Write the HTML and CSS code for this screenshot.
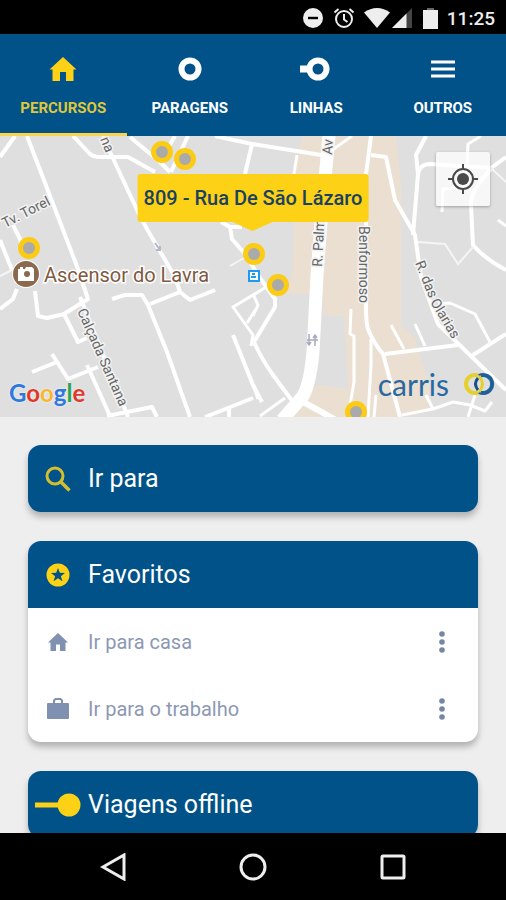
FILE: index.html
```
<!DOCTYPE html>
<html lang="pt">
<head>
  <meta charset="UTF-8" />
  <title>Carris - Percursos</title>
  <meta name="viewport" content="width=device-width, initial-scale=1.0" />
  <link rel="stylesheet" href="styles.css">
</head>
<body>
  <div class="status-bar">
    <svg width="22" height="22" viewBox="0 0 22 22"><circle cx="11" cy="11" r="10" fill="#eee"/><path d="M6 11h10" stroke="#000" stroke-width="2.4"/></svg>
    <svg width="22" height="22" viewBox="0 0 22 22" fill="none" stroke="#eee" stroke-width="2"><circle cx="11" cy="12" r="8"/><path d="M11 7v5.500l3.500 2.500M1.500 5.500l4-3.500M20.500 5.500l-4-3.500"/></svg>
    <svg class="wifi" width="26" height="20" viewBox="0 0 26 20"><path d="M0 4.500C8-1.500 18-1.500 26 4.500L13 20z" fill="#eee"/></svg>
    <svg class="signal" width="20" height="20" viewBox="0 0 20 20"><path d="M0 20L20 0v20z" fill="#444"/><path d="M0 20L14.500 5.500V20z" fill="#eee"/></svg>
    <svg class="battery" width="15" height="21" viewBox="0 0 15 21"><path d="M4 0h7v2h4v19H0V2h4z" fill="#eee"/><path d="M4 0h7v2H4z" fill="#666"/></svg>
    <span class="clock">11:25</span>
  </div>

  <nav class="tabs">
    <a href="#percursos" class="tab active">
      <svg width="28" height="28" viewBox="0 0 28 28"><path d="M14 2L.5 14.500h3V26h7.500v-9h6v9h7.500V14.500h3z" fill="currentColor"/></svg>
      <span>PERCURSOS</span>
    </a>
    <a href="#paragens" class="tab">
      <svg width="28" height="28" viewBox="0 0 28 28"><circle cx="14" cy="14" r="8.500" fill="none" stroke="currentColor" stroke-width="6"/></svg>
      <span>PARAGENS</span>
    </a>
    <a href="#linhas" class="tab">
      <svg width="32" height="28" viewBox="0 0 32 28"><circle cx="18" cy="14" r="8.500" fill="none" stroke="currentColor" stroke-width="6"/><path d="M0 14h10" stroke="currentColor" stroke-width="7"/></svg>
      <span>LINHAS</span>
    </a>
    <a href="#outros" class="tab">
      <svg width="28" height="28" viewBox="0 0 28 28"><path d="M2 7h24M2 14h24M2 21h24" stroke="currentColor" stroke-width="3"/></svg>
      <span>OUTROS</span>
    </a>
  </nav>

  <section class="map">
    <svg class="map-canvas" viewBox="0 0 506 281" preserveAspectRatio="xMidYMid slice">
      <rect width="506" height="281" fill="#dfdfdf"/>
      <!-- shopping area -->
      <path class="area" d="M303 0H396L401 50V189L415 202L423 229L430 250L428 275L405 281H290L296 256L320 249L348 253L344 180L323 179V158H286L293 135L294 60L297 19z"/>
      <g class="roads">
        <path d="M15 0L0 21M27 0L78 133L88 163L64 178L47 182L38 180L35 155"/>
        <path d="M73 0L89 17Q93 21 100 21H128L155 36M103 0L110 16L138 76L147 93L175 141L180 156L150 168M180 156L190 164L215 154"/>
        <path d="M112 163L125 159H142L148 169L167 216L190 281"/>
        <path d="M130 1L160 26L170 36M188 0L171 36M175 0L168 12M215 0L252 8L245 38M252 8L321 19"/>
        <path d="M221 86L230 91L232 103L245 118L260 142L275 163V171L254 206Q262 224 273 239L293 266M230 91H242"/>
        <path d="M13 89L20 103L24 120M0 104L12 134M17 153L13 163L0 173"/>
        <path d="M64 178L78 206L87 202M52 218L68 243L98 231M32 236L57 226M87 229L110 280M80 161L128 281"/>
        <path d="M107 280L152 271L157 281M205 281L228 272L253 262M229 272V281M233 199L253 249L262 266"/>
      </g>
      <g class="roads small">
        <path d="M268 150L233 171L253 199L251 210M247 187L256 173M253 158L258 169L253 180M253 249L258 263"/>
        <path d="M325 19L352 0M297 19L294 38M371 203V229L368 281"/>
        <path d="M481 0L468 8L466 51L443 53L442 76M498 84L506 90"/>
        <path d="M438 168L450 167L475 178L490 206M391 189L404 213M415 188L425 210"/>
        <path d="M351 173L350 198L354 200V246L348 281M376 259L374 281M285 262L260 280"/>
        <path d="M402 279L433 273L453 266L470 269L485 275L492 266M426 259L433 273M475 259L468 281"/>
      </g>
      <g class="roads">
        <path d="M371 0L366 38V171Q366 186 368 193Q373 206 383 218L400 281"/>
        <path d="M371 19L386 21L395 64L415 99L421 141L438 188L506 254M506 198L473 219M385 218L458 209"/>
        <path d="M426 0L416 19L418 38L413 99M418 38Q420 28 430 28L491 32L506 21"/>
        <path d="M491 33Q470 55 471 69L473 109Q485 123 506 134"/>
      </g>
      <path class="thin-road" d="M418 106L445 108L458 128L473 111M491 32L506 46M230 130L244 122M0 140L12 134"/>
      <path class="main-road" d="M329 0L321 86L317 140L313 216Q310 248 303 260L282 284"/>
      <path class="main-road fork" d="M296 262L336 284"/>
      <path d="M309 198v11m-2-3l2 3 2-3M315 210v-11m-2 3l2-3 2 3M307 204h11" fill="none" stroke="#a8aac0" stroke-width="1.500"/>
      <path d="M155 107l5 7m0-4v4h-4" fill="none" stroke="#b4b8cc" stroke-width="2"/>
      <g class="street-names">
        <text transform="translate(5 92) rotate(-27)">Tv. Torel</text>
        <text transform="translate(100 3) rotate(68)">na</text>
        <text transform="translate(77 175) rotate(66)">Calçada Santana</text>
        <text transform="translate(332 19) rotate(-86)">Av</text>
        <text transform="translate(322 131) rotate(-87)">R. Palma</text>
        <text transform="translate(359 90) rotate(90)">Benformoso</text>
        <text transform="translate(415 127) rotate(68)">R. das</text>
        <text transform="translate(430 166) rotate(59)">Olarias</text>
      </g>
      <g class="poi">
        <circle cx="26" cy="138" r="14" fill="#fff"/>
        <circle cx="26" cy="138" r="13" fill="#8b694f"/>
        <path d="M18 133h2v-2h3v2h2l1-2h6l2 2v12H18z" fill="#fff"/>
        <circle cx="27" cy="138" r="3" fill="#8b694f"/>
        <text x="44" y="146">Ascensor do Lavra</text>
      </g>
      <g class="station">
        <rect x="249" y="135" width="10" height="10" fill="#fff" stroke="#1d9bf0" stroke-width="2"/>
        <path d="M251 141h5M252 138h3" stroke="#1d9bf0" stroke-width="2"/>
      </g>
      <g class="stops">
        <circle cx="162" cy="16" r="8.500"/>
        <circle cx="185" cy="23" r="8.500"/>
        <circle cx="29" cy="112" r="8.500"/>
        <circle cx="254" cy="118" r="8.500"/>
        <circle cx="278" cy="149" r="8.500"/>
        <circle cx="356" cy="276" r="8.500"/>
      </g>
    </svg>
    <div class="callout">809 - Rua De São Lázaro</div>
    <button class="locate" aria-label="A minha localização">
      <svg width="30" height="30" viewBox="0 0 30 30"><circle cx="15" cy="15" r="10" fill="none" stroke="#4a4a4a" stroke-width="2"/><circle cx="15" cy="15" r="6" fill="#4a4a4a"/><path d="M15 0v5M15 25v5M0 15h5M25 15h5" stroke="#4a4a4a" stroke-width="2"/></svg>
    </button>
    <div class="google"><span class="g-blue">G</span><span class="g-red">o</span><span class="g-yellow">o</span><span class="g-blue">g</span><span class="g-green">l</span><span class="g-red">e</span></div>
    <div class="carris">
      <span>carris</span>
      <svg width="34" height="24" viewBox="0 0 34 24" fill="none" stroke-width="4">
        <path d="M16 3.500A9 9 0 1 0 16 20.500" stroke="#e5cf2b"/>
        <path d="M17 4A9 9 0 1 1 17 20" stroke="#1f609b"/>
        <path d="M16 6q-5 6 0 12" stroke="#174f86" stroke-width="3"/>
        <path d="M17 4q7 8 0 16" stroke="#e5cf2b" stroke-width="3"/>
      </svg>
    </div>
  </section>

  <main class="content">
    <button class="card card-header">
      <span class="icon"><svg width="26" height="26" viewBox="0 0 26 26" fill="none" stroke="#d3bd31" stroke-width="3"><circle cx="10" cy="10" r="8"/><path d="M15.500 15.500L24.500 24.500" stroke-width="3.500"/></svg></span>
      <span>Ir para</span>
    </button>

    <section class="card">
      <h2 class="card-header">
        <span class="icon"><svg width="24" height="24" viewBox="0 0 24 24"><circle cx="12" cy="12" r="11.500" fill="#fcd116"/><path d="M12 5l1.800 4.800 5.200.2-4.100 3.200 1.500 5L12 15.300l-4.400 2.900 1.500-5L5 10l5.200-.2z" fill="#005288"/></svg></span>
        <span>Favoritos</span>
      </h2>
      <ul class="favorites">
        <li>
          <a href="#casa">
            <span class="icon"><svg width="22" height="22" viewBox="0 0 22 22"><path d="M11 2L1 11.500h2.500V20H9v-6.500h4V20h5.500v-8.500H21z" fill="#8090b0"/></svg></span>
            <span>Ir para casa</span>
          </a>
          <button class="more" aria-label="Mais opções"><svg width="6" height="22" viewBox="0 0 6 22" fill="#7686a4"><circle cx="3" cy="3" r="2.800"/><circle cx="3" cy="11" r="2.800"/><circle cx="3" cy="19" r="2.800"/></svg></button>
        </li>
        <li>
          <a href="#trabalho">
            <span class="icon"><svg width="24" height="24" viewBox="0 0 24 24"><path d="M8 7V3.500L9.500 2h5L16 3.500V7" fill="none" stroke="#8090b0" stroke-width="2"/><rect x="1" y="6" width="22" height="16" rx="1" fill="#8090b0"/></svg></span>
            <span>Ir para o trabalho</span>
          </a>
          <button class="more" aria-label="Mais opções"><svg width="6" height="22" viewBox="0 0 6 22" fill="#7686a4"><circle cx="3" cy="3" r="2.800"/><circle cx="3" cy="11" r="2.800"/><circle cx="3" cy="19" r="2.800"/></svg></button>
        </li>
      </ul>
    </section>

    <section class="card">
      <h2 class="card-header">
        <span class="icon"><svg width="46" height="24" viewBox="0 0 46 24"><path d="M0 12h30" stroke="#fcd116" stroke-width="5"/><circle cx="34" cy="12" r="11.500" fill="#fcd116"/></svg></span>
        <span>Viagens offline</span>
      </h2>
    </section>
  </main>

  <footer class="system-nav">
    <button aria-label="Voltar"><svg width="28" height="28" viewBox="0 0 28 28"><path d="M25 2v24L4 14z"/></svg></button>
    <button aria-label="Início"><svg width="28" height="28" viewBox="0 0 28 28"><circle cx="14" cy="14" r="12"/></svg></button>
    <button aria-label="Recentes"><svg width="28" height="28" viewBox="0 0 28 28"><rect x="3" y="3" width="22" height="22" rx="1"/></svg></button>
  </footer>
</body>
</html>
```
FILE: styles.css
```
* {
  box-sizing: border-box;
}
body {
  margin: 0;
  height: 100vh;
  display: flex;
  flex-direction: column;
  background: #eee;
  font-family: Roboto, sans-serif;
}
button {
  border: none;
  background: none;
  padding: 0;
  font-family: inherit;
  cursor: pointer;
}
a {
  text-decoration: none;
}
svg {
  display: block;
  flex: none;
}
.status-bar {
  display: flex;
  flex: none;
  justify-content: flex-end;
  align-items: center;
  height: 34px;
  padding: 2px 11px 0 0;
  background: #000;
  color: #eee;
}
.status-bar svg {
  margin-right: 9px;
}
.status-bar .wifi {
  margin-right: 2px;
}
.status-bar .signal {
  margin-right: 11px;
}
.clock {
  font-size: 19px;
  font-weight: 500;
}
.tabs {
  display: flex;
  flex: none;
  height: 102px;
  background: #005288;
}
.tab {
  flex: 1;
  display: flex;
  flex-direction: column;
  align-items: center;
  gap: 15px;
  padding-top: 21px;
  border-bottom: 3px solid transparent;
  color: #fff;
  font-size: 15px;
  line-height: 20px;
  font-weight: 700;
}
.tab.active {
  color: #fcd116;
  border-color: #fcd34d;
}
.tab.active span {
  color: #dfc73c;
}

/* Map */
.map {
  position: relative;
  flex: none;
  height: 281px;
  overflow: hidden;
}
.map-canvas {
  width: 100%;
  height: 100%;
}
.area {
  fill: #eadfd1;
}
.roads {
  fill: none;
  stroke: #fff;
  stroke-width: 4;
  stroke-linejoin: round;
}
.roads.small {
  stroke-width: 3;
}
.thin-road {
  fill: none;
  stroke: #f5f5f5;
  stroke-width: 2;
}
.main-road {
  fill: none;
  stroke: #fff;
  stroke-width: 13;
}
.main-road.fork {
  stroke-width: 6;
}
.street-names {
  font-size: 14px;
  fill: #666;
  stroke: #f2f2f2;
  stroke-width: 3;
  paint-order: stroke;
}
.poi text {
  font-size: 20px;
  fill: #7d5a41;
  stroke: #fff;
  stroke-width: 3;
  paint-order: stroke;
}
.stops {
  fill: #aaa;
  stroke: #fccb14;
  stroke-width: 5;
}
.callout {
  position: absolute;
  top: 38px;
  left: 50%;
  transform: translateX(-50%);
  padding: 0 6px;
  border-radius: 3px;
  background: #fcd116;
  color: #1b4160;
  font-size: 20px;
  line-height: 48px;
  font-weight: 500;
  white-space: nowrap;
}
.callout::after {
  content: "";
  position: absolute;
  top: 100%;
  left: 50%;
  margin-left: -20px;
  border: 20px solid transparent;
  border-top: 9px solid #fcd116;
  border-bottom: none;
}
.locate {
  position: absolute;
  top: 16px;
  right: 16px;
  width: 54px;
  height: 54px;
  display: flex;
  align-items: center;
  justify-content: center;
  border-radius: 2px;
  background: rgba(255, 255, 255, 0.75);
  box-shadow: 0 1px 3px rgba(0, 0, 0, 0.3);
}
.google {
  position: absolute;
  left: 9px;
  bottom: 8px;
  font-family: Lato, sans-serif;
  font-size: 24px;
  font-weight: 700;
  line-height: 32px;
  text-shadow: 0 0 2px #fff;
}
.g-blue {
  color: #2f78e0;
}
.g-red {
  color: #e0392c;
}
.g-yellow {
  color: #f5b82e;
}
.g-green {
  color: #2ca350;
}
.carris {
  position: absolute;
  right: 10px;
  bottom: 17px;
  display: flex;
  align-items: center;
  gap: 13px;
  color: #2a699f;
  font-family: Lato, sans-serif;
  font-size: 30px;
  line-height: 32px;
}

/* Cards */
.content {
  flex: 1;
  min-height: 0;
  padding: 28px;
  overflow-y: auto;
  scrollbar-width: none;
}
.card {
  width: 100%;
  margin-bottom: 29px;
  border-radius: 13px;
  background: #fff;
  overflow: hidden;
  box-shadow: 0 5px 6px rgba(0, 0, 0, 0.25);
}
.card-header {
  display: flex;
  align-items: center;
  height: 67px;
  background: #005288;
  color: #fff;
  font-size: 25px;
  font-weight: 400;
  text-align: left;
}
h2.card-header {
  margin: 0;
}
.icon {
  display: flex;
  flex: none;
  justify-content: center;
  width: 60px;
}
.favorites {
  list-style: none;
  margin: 0;
  padding: 0;
}
.favorites li {
  display: flex;
  align-items: center;
  height: 67px;
}
.favorites a {
  flex: 1;
  display: flex;
  align-items: center;
  color: #8c98b4;
  font-size: 20px;
}
.more {
  display: flex;
  justify-content: center;
  width: 72px;
}

.system-nav {
  display: flex;
  flex: none;
  justify-content: space-around;
  align-items: center;
  height: 67px;
  padding: 0 43px;
  background: #000;
}
.system-nav svg {
  fill: none;
  stroke: #eee;
  stroke-width: 3;
}
```
